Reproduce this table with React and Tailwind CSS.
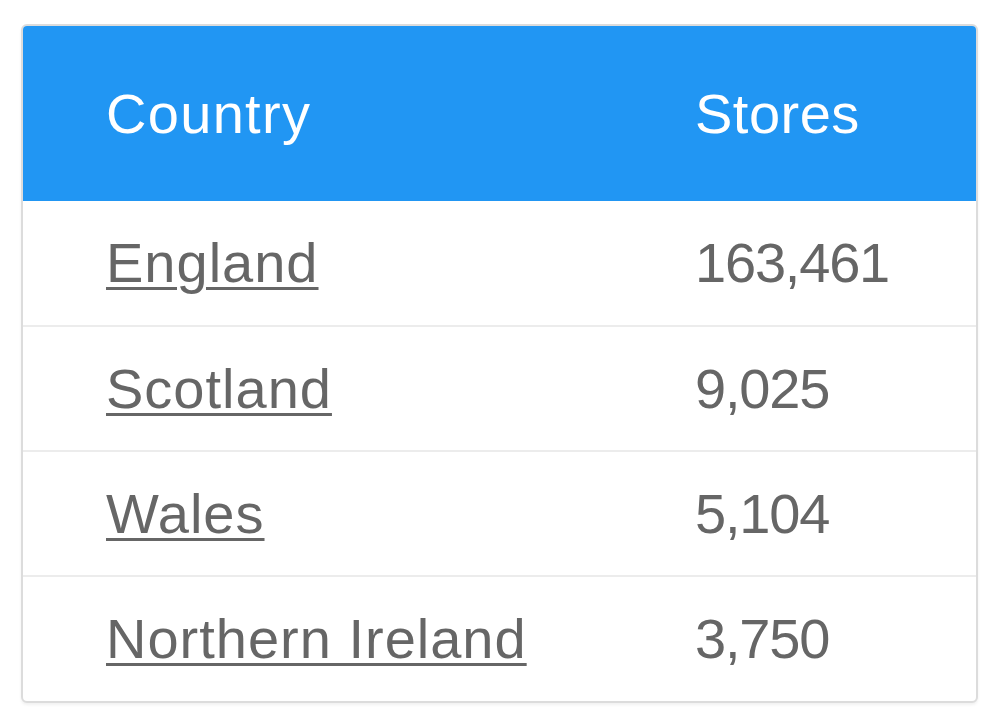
const rows = [
  { country: "England", stores: "163,461" },
  { country: "Scotland", stores: "9,025" },
  { country: "Wales", stores: "5,104" },
  { country: "Northern Ireland", stores: "3,750" },
];

export default function App() {
  return (
    <div className="min-h-screen bg-white px-[21px] pt-[24px] font-['Liberation_Sans',Arial,sans-serif]">
      <div className="w-[957px] overflow-hidden rounded-md border-2 border-[#dcdcdc] bg-white shadow-[0_2px_3px_rgba(0,0,0,0.06)]">
        <table className="w-full border-collapse text-[56px] leading-none">
          <thead>
            <tr className="h-[175px] bg-[#2196f3] text-white">
              <th className="w-[672px] pl-[83px] text-left font-normal tracking-[1.3px]">Country</th>
              <th className="text-left font-normal tracking-[0.5px]">Stores</th>
            </tr>
          </thead>
          <tbody>
            {rows.map((r, i) => (
              <tr
                key={r.country}
                className={`h-[125px] text-[#666666] ${i > 0 ? "border-t-2 border-[#ececec]" : ""}`}
              >
                <td className="pl-[83px] tracking-[1px]">
                  <a
                    href="#"
                    className="underline decoration-[3px] underline-offset-[5px]"
                  >
                    {r.country}
                  </a>
                </td>
                <td className="tracking-[-1.2px]">{r.stores}</td>
              </tr>
            ))}
          </tbody>
        </table>
      </div>
    </div>
  );
}
